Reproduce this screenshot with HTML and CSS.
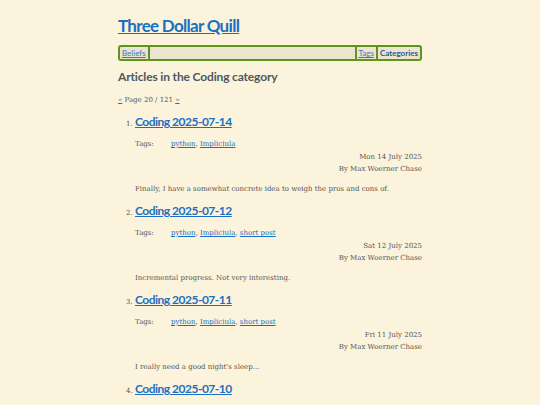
FILE: index.html
```html
<!DOCTYPE html>
<html lang="en">
<head>
	<meta charset="UTF-8">
	<title>Articles in the Coding category - Three Dollar Quill</title>
	<link rel="stylesheet" href="styles.css">
</head>
<body>
	<div id="wrapper">
		<h1 class="site-title"><a href="#">Three Dollar Quill</a></h1>
		<nav class="menu">
			<a class="menu-link" href="#">Beliefs</a>
			<span class="menu-fill"></span>
			<a class="menu-link" href="#">Tags</a>
			<a class="menu-link current" href="#">Categories</a>
		</nav>

		<h2 class="page-title">Articles in the Coding category</h2>
		<p class="pager"><a href="#">«</a> Page 20 / 121 <a href="#">»</a></p>

		<ol class="articles" start="1">
			<li>
				<h3 class="entry-title"><a href="#">Coding 2025-07-14</a></h3>
				<div class="tags"><span class="tags-label">Tags:</span><a href="#">python</a>, <a href="#">Impliciula</a></div>
				<div class="meta">
					<div>Mon 14 July 2025</div>
					<div>By Max Woerner Chase</div>
				</div>
				<p class="summary">Finally, I have a somewhat concrete idea to weigh the pros and cons of.</p>
			</li>
			<li>
				<h3 class="entry-title"><a href="#">Coding 2025-07-12</a></h3>
				<div class="tags"><span class="tags-label">Tags:</span><a href="#">python</a>, <a href="#">Impliciula</a>, <a href="#">short post</a></div>
				<div class="meta">
					<div>Sat 12 July 2025</div>
					<div>By Max Woerner Chase</div>
				</div>
				<p class="summary">Incremental progress. Not very interesting.</p>
			</li>
			<li>
				<h3 class="entry-title"><a href="#">Coding 2025-07-11</a></h3>
				<div class="tags"><span class="tags-label">Tags:</span><a href="#">python</a>, <a href="#">Impliciula</a>, <a href="#">short post</a></div>
				<div class="meta">
					<div>Fri 11 July 2025</div>
					<div>By Max Woerner Chase</div>
				</div>
				<p class="summary">I really need a good night's sleep...</p>
			</li>
			<li>
				<h3 class="entry-title"><a href="#">Coding 2025-07-10</a></h3>
				<div class="tags"><span class="tags-label">Tags:</span><a href="#">python</a>, <a href="#">Impliciula</a></div>
				<div class="meta">
					<div>Thu 10 July 2025</div>
					<div>By Max Woerner Chase</div>
				</div>
				<p class="summary">More work on it.</p>
			</li>
		</ol>
	</div>
</body>
</html>
```

FILE: styles.css
```css
body {
	margin: 0;
	background-color: #fbf3dc;
	color: #555;
	font-family: "DejaVu Serif", serif;
	font-size: 7px;
}
a {
	color: #1d6fbf;
}
#wrapper {
	width: 304px;
	margin: 0 auto;
	padding-top: 13px;
}
.site-title {
	margin: 0;
	font-family: Lato, sans-serif;
	font-size: 17px;
	line-height: 26px;
	font-weight: bold;
	letter-spacing: -0.7px;
}
.menu {
	display: flex;
	align-items: stretch;
	margin-top: 6px;
	height: 12px;
	border: 2px solid #5e961b;
	border-radius: 3px;
	background-color: #ebe4cf;
	font-family: Lato, sans-serif;
	font-size: 8px;
	line-height: 12px;
}
.menu-link {
	padding: 0 2px;
	border-right: 2px solid #5e961b;
	color: #3b78bd;
}
.menu-link:last-child {
	border-right: none;
}
.menu-fill {
	flex: 1;
	border-right: 2px solid #5e961b;
}
.menu .current {
	font-weight: bold;
	color: #245a9a;
	text-decoration: none;
}
.page-title {
	margin: 8px 0 0;
	font-family: Lato, sans-serif;
	font-size: 12px;
	line-height: 16px;
	color: #4b5961;
	letter-spacing: -0.15px;
}
.pager {
	margin: 9px 0 0;
	line-height: 12px;
}
.articles {
	margin: 8px 0 0;
	padding-left: 17px;
}
.articles li {
	margin-bottom: 8px;
}
.entry-title {
	margin: 0;
	font-family: Lato, sans-serif;
	font-size: 12px;
	line-height: 16px;
	letter-spacing: -0.5px;
}
.tags {
	margin-top: 8px;
	line-height: 12px;
}
.tags-label {
	display: inline-block;
	width: 36px;
}
.meta {
	margin-top: 1px;
	text-align: right;
	line-height: 12px;
}
.summary {
	margin: 8px 0 0;
	line-height: 12px;
}
```
